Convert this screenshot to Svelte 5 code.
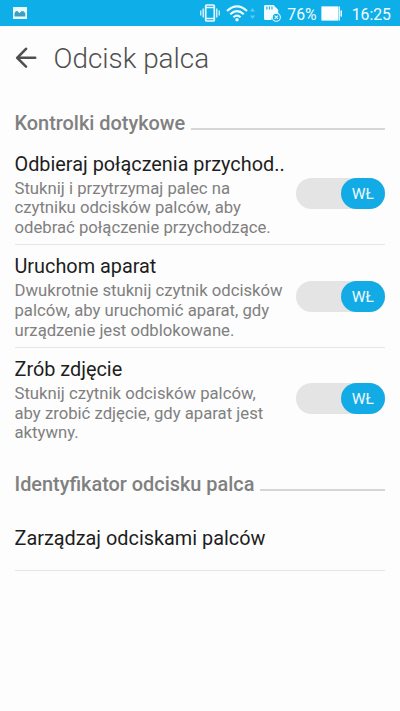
<script lang="ts">
  type Setting = {
    id: string;
    title: string;
    summary: string;
    enabled: boolean;
  };

  let settings: Setting[] = $state([
    {
      id: "calls",
      title: "Odbieraj połączenia przychod..",
      summary: "Stuknij i przytrzymaj palec na czytniku odcisków palców, aby odebrać połączenie przychodzące.",
      enabled: true,
    },
    {
      id: "camera",
      title: "Uruchom aparat",
      summary: "Dwukrotnie stuknij czytnik odcisków palców, aby uruchomić aparat, gdy urządzenie jest odblokowane.",
      enabled: true,
    },
    {
      id: "photo",
      title: "Zrób zdjęcie",
      summary: "Stuknij czytnik odcisków palców, aby zrobić zdjęcie, gdy aparat jest aktywny.",
      enabled: true,
    },
  ]);
</script>

<div class="screen">
  <div class="status">
    <svg class="picture" width="14" height="12" viewBox="0 0 14 12">
      <rect width="14" height="12" rx="0.5" fill="#e9fbff" />
      <path d="M1.5 9.5V6.2Q3.4 2.2 5.6 5.2L6.6 6Q9.6 1.8 12.3 6.2v3.3z" fill="#3f9fc0" />
    </svg>
    <div class="indicators">
      <svg class="vibrate" width="20" height="18" viewBox="0 0 20 18" fill="none" stroke="#e9fbff">
        <rect x="5.7" y="1" width="8.6" height="16" rx="1" stroke-width="1.7" />
        <path d="M6 3.5h8M6 14.5h8" stroke-width="1.5" />
        <path d="M3.2 4.5v9M16.8 4.5v9" stroke-width="1.3" />
        <path d="M0.8 6.5v5M19.2 6.5v5" stroke-width="1.2" />
      </svg>
      <svg class="wifi" width="22" height="17" viewBox="0 0 22 17" fill="none" stroke="#f2fdff" stroke-width="2.1">
        <path d="M1 6Q11-3.2 21 6M4.2 9.2Q11 3 17.8 9.2M7.4 12.2Q11 9 14.6 12.2" />
        <circle cx="11" cy="14.7" r="1.7" fill="#f2fdff" stroke="none" />
      </svg>
      <svg class="traffic" width="5" height="13" viewBox="0 0 6 13" fill="#61cbed">
        <path d="M3 0l3 4H0zM0 9h6l-3 4z" />
      </svg>
      <svg class="sim" width="18" height="17" viewBox="0 0 19 18">
        <path d="M1.5 0H10l5 5v5.5A5.2 5.2 0 0 0 8 16H1.5A1.5 1.5 0 0 1 0 14.5v-13A1.5 1.5 0 0 1 1.5 0z" fill="#f2fdff" />
        <path d="M3 1.5v3.3M5.7 1.5v3.3M8.4 1.5v3.3" stroke="#0eaee8" stroke-width="1.2" />
        <circle cx="13" cy="13" r="4.3" fill="#0eaee8" stroke="#f2fdff" stroke-width="1.1" />
        <path d="M11.2 11.2l3.6 3.6M14.8 11.2l-3.6 3.6" stroke="#f2fdff" stroke-width="1.1" />
      </svg>
      <span class="percent">76%</span>
      <svg class="battery" width="22" height="15" viewBox="0 0 22 15">
        <path d="M0.5 0.5h18v4h2.5v6h-2.5v4h-18z" fill="#8adaf4" />
        <path d="M0.5 0.5H17v14H0.5z" fill="#fff" />
        <path d="M18.4 0.5v14M20.5 4.5v6" stroke="#e9fbff" stroke-width="1" />
      </svg>
      <span class="clock">16:25</span>
    </div>
  </div>

  <header>
    <button class="back" type="button" aria-label="Wstecz">
      <svg width="22" height="22" viewBox="0 0 22 22" fill="none" stroke="#4f4f4f" stroke-width="2.6" stroke-linecap="round" stroke-linejoin="round">
        <path d="M11 1.8L2.2 10.8l8.8 8.8M2.6 10.8h17.6" />
      </svg>
    </button>
    <h1>Odcisk palca</h1>
  </header>

  <main>
    <h2>Kontrolki dotykowe</h2>

    {#each settings as setting (setting.id)}
      <section class="setting">
        <div class="text">
          <h3>{setting.title}</h3>
          <p>{setting.summary}</p>
        </div>
        <button
          class="toggle"
          class:on={setting.enabled}
          type="button"
          role="switch"
          aria-checked={setting.enabled}
          aria-label={setting.title}
          onclick={() => (setting.enabled = !setting.enabled)}
        >
          <span class="knob">{setting.enabled ? "WŁ" : "WYŁ"}</span>
        </button>
      </section>
    {/each}

    <h2 class="second">Identyfikator odcisku palca</h2>
    <section class="link">
      <h3>Zarządzaj odciskami palców</h3>
    </section>
  </main>
</div>

<style>
  :global(body) {
    margin: 0;
    background: #fdfdfd;
  }

  .screen {
    height: 711px;
    overflow: hidden;
    background: #fdfdfd;
    font-family: Roboto, "Noto Sans", sans-serif;
  }

  h1,
  h2,
  h3,
  p {
    margin: 0;
  }

  button {
    padding: 0;
    border: none;
    background: none;
    font-family: inherit;
    cursor: pointer;
  }

  svg {
    display: block;
    flex: none;
  }

  .status {
    display: flex;
    align-items: center;
    justify-content: space-between;
    height: 26px;
    padding: 0 9px 0 13px;
    box-sizing: border-box;
    background: #0eaee8;
    color: #f2fdff;
    font-size: 15.8px;
    line-height: 26px;
  }

  .indicators {
    display: flex;
    align-items: center;
    white-space: nowrap;
  }

  .wifi {
    margin-left: 6px;
  }

  .traffic {
    margin-left: 2px;
  }

  .sim {
    margin-left: 9px;
  }

  .percent {
    margin: 3px 0 0 5px;
  }

  .battery {
    margin-left: 4px;
  }

  .clock {
    margin: 3px 0 0 9px;
  }

  header {
    display: flex;
    align-items: center;
    height: 64px;
    padding-left: 15px;
  }

  .back {
    width: 22px;
  }

  h1 {
    margin: 2px 0 0 16.5px;
    color: #4f4f4f;
    font-size: 27.9px;
    font-weight: 300;
    line-height: 34px;
    white-space: nowrap;
  }

  main {
    padding: 0 15px 0 14.5px;
  }

  h2 {
    display: flex;
    align-items: flex-start;
    height: 45.5px;
    box-sizing: border-box;
    margin-top: 7px;
    padding-top: 15px;
    color: #808080;
    font-size: 19.9px;
    font-weight: 500;
    line-height: 24px;
    white-space: nowrap;
  }

  h2::after {
    content: "";
    flex: 1;
    height: 2px;
    margin: 15.5px 0 0 6px;
    background: #d6d6d6;
  }

  .setting {
    display: flex;
    justify-content: space-between;
    height: 102.67px;
    box-sizing: border-box;
    border-bottom: 1px solid #e6e6e6;
  }

  .setting:has(+ h2) {
    border-bottom-color: transparent;
  }

  .text {
    width: 270px;
    padding-top: 9px;
  }

  h3 {
    color: #1e1e1e;
    font-size: 19.85px;
    font-weight: 400;
    line-height: 25px;
    white-space: nowrap;
  }

  p {
    margin-top: 2px;
    color: #808080;
    font-size: 16.7px;
    line-height: 19.7px;
  }

  .toggle {
    display: flex;
    width: 89px;
    height: 31px;
    margin-top: 35.4px;
    border-radius: 15.5px;
    background: #e4e4e4;
  }

  .toggle.on {
    justify-content: flex-end;
  }

  .knob {
    width: 44.5px;
    height: 31px;
    border-radius: 15.5px;
    background: #b0b0b0;
    color: #effaff;
    font-size: 15.5px;
    line-height: 33px;
    text-align: center;
  }

  .on .knob {
    background: #12abe6;
  }

  .second {
    height: 50.5px;
    margin-top: 8px;
  }

  .link {
    display: flex;
    align-items: center;
    height: 60px;
    padding-bottom: 1px;
    box-sizing: border-box;
    border-bottom: 1px solid #e6e6e6;
    height: 62px;
  }
</style>
